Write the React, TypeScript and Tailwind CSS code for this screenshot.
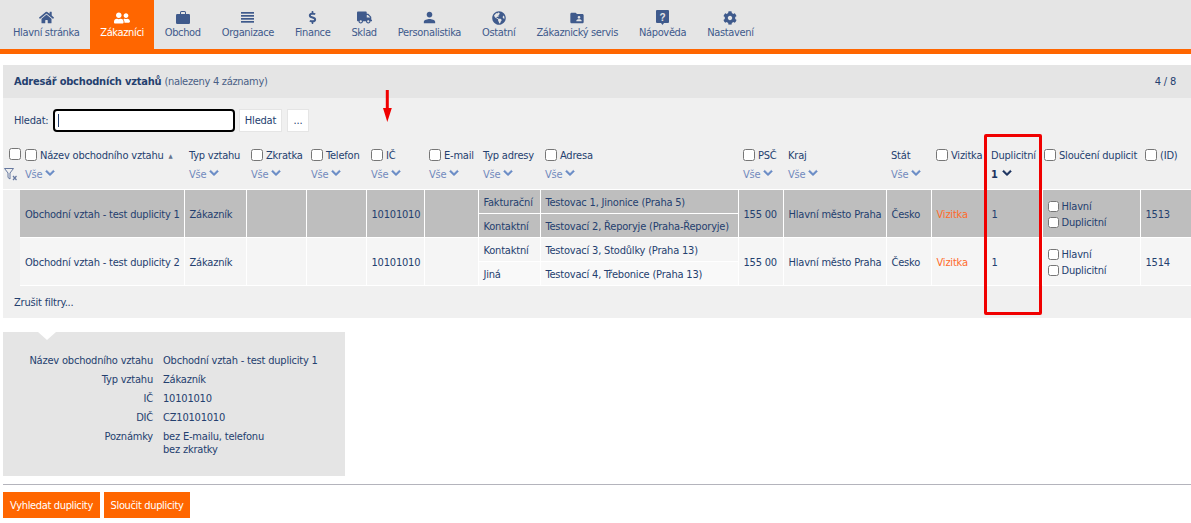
import React from "react";
import { FaHome, FaUserFriends, FaDollarSign, FaTruck, FaGlobeAmericas, FaCog, FaChevronDown } from "react-icons/fa";
import { MdPerson, MdFolderShared } from "react-icons/md";

function Bars() {
  return (
    <svg width="13" height="11" viewBox="0 0 13 11" fill="currentColor">
      <rect x="0" y="0" width="13" height="1.700" />
      <rect x="0" y="3" width="13" height="1.700" />
      <rect x="0" y="6" width="13" height="1.700" />
      <rect x="0" y="9" width="13" height="1.700" />
    </svg>
  );
}

function Case() {
  return (
    <svg width="14" height="13" viewBox="0 0 14 13">
      <path d="M4 3V1.500A1.500 1.500 0 0 1 5.500 0h3A1.500 1.500 0 0 1 10 1.500V3H9V1.500a.5.5 0 0 0-.5-.5h-3a.5.5 0 0 0-.5.5V3z" fill="currentColor" />
      <rect x="0" y="3" width="14" height="10" rx="1.200" fill="currentColor" />
    </svg>
  );
}

function HelpBook() {
  return (
    <svg width="13" height="15" viewBox="0 0 13 15">
      <path d="M1 0h11a1 1 0 0 1 1 1v11a1 1 0 0 1-1 1H8l-1.500 2L5 13H1a1 1 0 0 1-1-1V1a1 1 0 0 1 1-1z" fill="currentColor" />
      <text x="6.500" y="10.500" textAnchor="middle" fontSize="10" fontWeight="700" fill="#e5e5e5" fontFamily="Liberation Sans, sans-serif">?</text>
    </svg>
  );
}

const navItems: { label: string; icon: React.ReactNode; active?: boolean }[] = [
  { label: "Hlavní stránka", icon: <FaHome size={15} /> },
  { label: "Zákazníci", icon: <FaUserFriends size={16} />, active: true },
  { label: "Obchod", icon: <Case /> },
  { label: "Organizace", icon: <Bars /> },
  { label: "Finance", icon: <FaDollarSign size={13} /> },
  { label: "Sklad", icon: <FaTruck size={15} /> },
  { label: "Personalistika", icon: <MdPerson size={17} /> },
  { label: "Ostatní", icon: <FaGlobeAmericas size={14} /> },
  { label: "Zákaznický servis", icon: <MdFolderShared size={16} /> },
  { label: "Nápověda", icon: <HelpBook /> },
  { label: "Nastavení", icon: <FaCog size={14} /> },
];

function Nav() {
  return (
    <nav className="flex h-[54px] border-b-[5px] border-[#ff6600] bg-[#e5e5e5] pl-[2.5px] tracking-[-0.35px]">
      {navItems.map((it) => (
        <div
          key={it.label}
          className={
            it.active
              ? "flex h-[49px] flex-col items-center bg-[#ff6600] px-[10.3px] text-white"
              : "flex h-[49px] flex-col items-center px-[10.5px] text-[#3f5a8c]"
          }
        >
          <div className="mt-[9px] flex h-[17px] items-center justify-center">{it.icon}</div>
          <div className="leading-[14px]">{it.label}</div>
        </div>
      ))}
    </nav>
  );
}

function Chevron() {
  return <FaChevronDown size={10} stroke="currentColor" strokeWidth={30} className="mt-[-3px] text-[#6a8cc6]" />;
}

function Vse() {
  return (
    <div className="mt-[5px] flex h-[14px] items-center gap-[3px] text-[#7189bd]">
      <span>Vše</span>
      <Chevron />
    </div>
  );
}

function Head({ label, check = false, filter = true, sort = false, tight = false }: { label: string; check?: boolean; filter?: boolean; sort?: boolean; tight?: boolean }) {
  return (
    <th className={(tight ? "px-[2px]" : "px-[5px]") + " h-[49px] border-b border-white align-top font-normal"}>
      <div className="mt-[8px] flex h-[14px] items-center gap-[2px] whitespace-nowrap text-left text-[#24406f]">
        {check && <input type="checkbox" className="mr-[1px] h-[12px] w-[12px] shrink-0" />}
        <span>{label}</span>
        {sort && <span className="ml-[3px] mt-[1px] text-[6px] text-[#66748f]">▲</span>}
      </div>
      {filter && <Vse />}
    </th>
  );
}

function Cell({ children, rowSpan = 2, cls = "" }: { children?: React.ReactNode; rowSpan?: number; cls?: string }) {
  return (
    <td rowSpan={rowSpan} className={"border-r border-b border-white px-[5px] pt-[2px] whitespace-nowrap " + cls}>
      {children}
    </td>
  );
}

function Merge() {
  return (
    <div className="flex flex-col gap-[3px]">
      <label className="flex h-[13px] items-center gap-[3px]">
        <input type="checkbox" className="h-[11px] w-[11px]" />
        <span>Hlavní</span>
      </label>
      <label className="flex h-[13px] items-center gap-[3px]">
        <input type="checkbox" className="h-[11px] w-[11px]" />
        <span>Duplicitní</span>
      </label>
    </div>
  );
}

function DataRows({ name, id, rowBg, a1, a2, t1, t2, lastBg }: { name: string; id: string; rowBg: string; a1: string; a2: string; t1: string; t2: string; lastBg: string }) {
  return (
    <>
      <tr className={rowBg + " h-[24px]"}>
        <td rowSpan={2} className="bg-[#f0f0f0]" />
        <Cell>{name}</Cell>
        <Cell>Zákazník</Cell>
        <Cell />
        <Cell />
        <Cell>10101010</Cell>
        <Cell />
        <Cell rowSpan={1}>{t1}</Cell>
        <Cell rowSpan={1}>{a1}</Cell>
        <Cell>155 00</Cell>
        <Cell>Hlavní město Praha</Cell>
        <Cell>Česko</Cell>
        <Cell cls="text-[#ff6b2b]">Vizitka</Cell>
        <Cell>1</Cell>
        <Cell><Merge /></Cell>
        <td rowSpan={2} className="border-b border-white px-[5px] pt-[2px]">{id}</td>
      </tr>
      <tr className={rowBg + " h-[24px]"}>
        <Cell rowSpan={1} cls={lastBg}>{t2}</Cell>
        <Cell rowSpan={1} cls={lastBg}>{a2}</Cell>
      </tr>
    </>
  );
}

const infoRows: [string, React.ReactNode][] = [
  ["Název obchodního vztahu", "Obchodní vztah - test duplicity 1"],
  ["Typ vztahu", "Zákazník"],
  ["IČ", "10101010"],
  ["DIČ", "CZ10101010"],
  ["Poznámky", <>bez E-mailu, telefonu<br />bez zkratky</>],
];

export default function App() {
  return (
    <div className="relative min-h-[523px] bg-white font-['DejaVu_Sans_Condensed','Noto_Sans',sans-serif] text-[11px] leading-[13px] tracking-[-0.2px] text-[#24406f]">
      <Nav />
      <main className="pl-[3px]">
        <section className="mt-[11px] h-[253px] bg-[#f0f0f0]">
          <div className="flex h-[33px] items-center justify-between bg-[#e5e5e5] pl-[11px] pr-[15px]">
            <div>
              <b>Adresář obchodních vztahů</b> <span className="tracking-[-0.3px] text-[#4a5f86]">(nalezeny 4 záznamy)</span>
            </div>
            <div>4 / 8</div>
          </div>
          <div className="flex h-[42px] items-center pl-[11px] pt-[2px]">
            <span className="w-[39px]">Hledat:</span>
            <div className="relative">
              <input className="block h-[23px] w-[182px] rounded-[4px] border-2 border-black bg-white px-[3px] outline-none" />
              <span className="absolute left-[5px] top-[5px] h-[13px] w-px bg-[#24406f]" />
            </div>
            <button className="ml-[4px] h-[23px] w-[43px] border border-[#e5e5e5] bg-white text-[#24406f]">Hledat</button>
            <button className="ml-[5px] h-[23px] w-[22px] border border-[#e5e5e5] bg-white text-[#24406f]">...</button>
          </div>
          <table className="w-[1188px] table-fixed border-collapse">
            <colgroup>
              {[17, 164, 62, 60, 60, 58, 54, 62, 198, 45, 103, 45, 55, 56, 98, 51].map((w, i) => (
                <col key={i} style={{ width: w }} />
              ))}
            </colgroup>
            <thead>
              <tr>
                <th className="relative border-b border-white align-top">
                  <input type="checkbox" className="absolute left-[6px] top-[8px] h-[12px] w-[12px]" />
                  <svg width="14" height="13" viewBox="0 0 14 13" className="absolute left-[1px] top-[28px] text-[#66789f]">
                    <path d="M0.500 0.500h9L6 5v6L4 9.500V5z" fill="none" stroke="currentColor" />
                    <path d="M9 8l3.500 4M12.500 8L9 12" stroke="currentColor" strokeWidth="1.200" />
                  </svg>
                </th>
                <Head label="Název obchodního vztahu" check sort />
                <Head label="Typ vztahu" />
                <Head label="Zkratka" check />
                <Head label="Telefon" check />
                <Head label="IČ" check />
                <Head label="E-mail" check />
                <Head label="Typ adresy" />
                <Head label="Adresa" check />
                <Head label="PSČ" check />
                <Head label="Kraj" />
                <Head label="Stát" />
                <Head label="Vizitka" check filter={false} />
                <th className="h-[49px] border-b border-white px-[5px] align-top font-normal">
                  <div className="mt-[8px] flex h-[14px] items-center text-left">Duplicitní</div>
                  <div className="mt-[5px] flex h-[14px] items-center gap-[4px] font-bold text-[#1d3461]">
                    <span>1</span>
                    <FaChevronDown size={10} stroke="currentColor" strokeWidth={30} className="mt-[-3px]" />
                  </div>
                </th>
                <Head label="Sloučení duplicit" check filter={false} tight />
                <Head label="(ID)" check filter={false} />
              </tr>
            </thead>
            <tbody>
              <DataRows
                name="Obchodní vztah - test duplicity 1"
                id="1513"
                rowBg="bg-[#bebebe]"
                t1="Fakturační"
                a1="Testovac 1, Jinonice (Praha 5)"
                t2="Kontaktní"
                a2="Testovací 2, Řeporyje (Praha-Řeporyje)"
                lastBg=""
              />
              <DataRows
                name="Obchodní vztah - test duplicity 2"
                id="1514"
                rowBg="bg-[#f5f5f5]"
                t1="Kontaktní"
                a1="Testovací 3, Stodůlky (Praha 13)"
                t2="Jiná"
                a2="Testovací 4, Třebonice (Praha 13)"
                lastBg="bg-[#f9f9f9]"
              />
            </tbody>
          </table>
          <div className="flex h-[32px] items-center pl-[11px] pt-[2px]">Zrušit filtry...</div>
        </section>

        <section className="relative mt-[14px] h-[144px] w-[342px] bg-[#e5e5e5] pt-[22px]">
          <div className="absolute left-[35px] top-0 h-0 w-0 border-x-[9px] border-t-[8px] border-x-transparent border-t-white" />
          {infoRows.map(([k, v]) => (
            <div key={k} className="mb-[6px] flex">
              <div className="w-[150px] text-right">{k}</div>
              <div className="ml-[10px]">{v}</div>
            </div>
          ))}
        </section>

        <hr className="mt-[8px] border-t border-[#b4b4bc]" />

        <div className="mt-[7px] flex gap-[4px] tracking-[-0.35px]">
          <button className="h-[26px] w-[97px] whitespace-nowrap bg-[#ff6600] text-white">Vyhledat duplicity</button>
          <button className="h-[26px] w-[86px] whitespace-nowrap bg-[#ff6600] text-white">Sloučit duplicity</button>
        </div>
      </main>

      <svg width="10" height="34" viewBox="0 0 10 34" className="absolute left-[382px] top-[89px]">
        <path d="M3.800 1h3v18h3L5.300 33 1 19h2.800z" fill="#f00000" />
      </svg>
      <div className="absolute left-[984px] top-[134px] h-[181px] w-[58px] rounded-[2px] border-[3px] border-[#f00000]" />
    </div>
  );
}
